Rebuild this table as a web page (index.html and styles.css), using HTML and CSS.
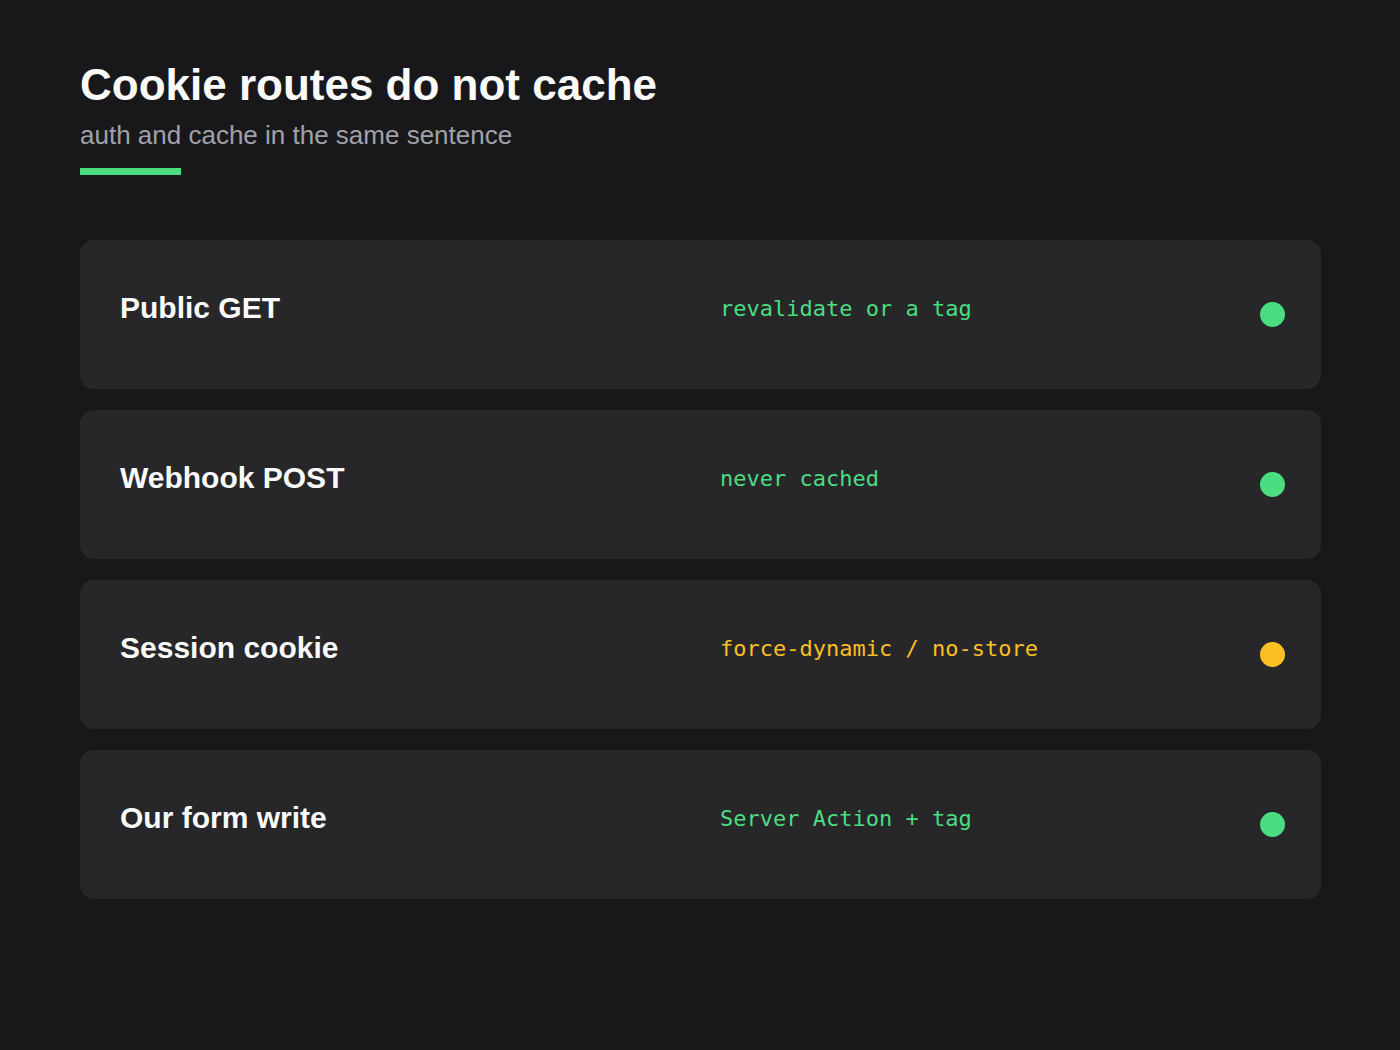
FILE: index.html
```html
<!DOCTYPE html>
<html lang="en">

<head>
  <meta charset="UTF-8" />
  <meta name="viewport" content="width=device-width, initial-scale=1.0" />
  <title>Cookie routes do not cache</title>
  <link rel="stylesheet" href="styles.css">
</head>

<body>
  <div class="page">
    <div class="header">
      <h1>Cookie routes do not cache</h1>
      <div class="subtitle">auth and cache in the same sentence</div>
      <div class="accent-bar"></div>
    </div>

    <div class="route-list">
      <div class="route-card">
        <div class="route-info">
          <div class="route-name">Public GET</div>
          <div class="route-rule ok">revalidate or a tag</div>
        </div>
        <span class="status-dot ok"></span>
      </div>

      <div class="route-card">
        <div class="route-info">
          <div class="route-name">Webhook POST</div>
          <div class="route-rule ok">never cached</div>
        </div>
        <span class="status-dot ok"></span>
      </div>

      <div class="route-card">
        <div class="route-info">
          <div class="route-name">Session cookie</div>
          <div class="route-rule warn">force-dynamic / no-store</div>
        </div>
        <span class="status-dot warn"></span>
      </div>

      <div class="route-card">
        <div class="route-info">
          <div class="route-name">Our form write</div>
          <div class="route-rule ok">Server Action + tag</div>
        </div>
        <span class="status-dot ok"></span>
      </div>
    </div>
  </div>
</body>

</html>
```

FILE: styles.css
```css
/* Base */
* {
  box-sizing: border-box;
  margin: 0;
  padding: 0;
}

body {
  font-family: 'Liberation Sans', Arial, sans-serif;
  background-color: #18181b;
  color: #fafafa;
  width: 1400px;
  height: 1050px;
}

.page {
  padding: 60px 79px 60px 80px;
}

/* Header */
h1 {
  font-size: 44px;
  font-weight: 700;
  color: #fafafa;
}

.subtitle {
  font-size: 26px;
  color: #a1a1aa;
  margin-top: 10px;
}

.accent-bar {
  width: 101px;
  height: 7px;
  background-color: #4ade80;
  margin-top: 17px;
}

/* Route cards */
.route-list {
  display: flex;
  flex-direction: column;
  gap: 21px;
  margin-top: 65px;
}

.route-card {
  display: flex;
  align-items: center;
  height: 149px;
  padding: 0 36px 0 40px;
  background-color: #27272a;
  border-radius: 14px;
}

.route-info {
  flex: 1;
  display: flex;
  align-items: center;
  padding-bottom: 13px;
}

.route-name {
  width: 600px;
  font-size: 30px;
  font-weight: 700;
  color: #fafafa;
}

.route-rule {
  font-family: 'DejaVu Sans Mono', monospace;
  font-size: 22px;
}

.route-rule.ok {
  color: #4ade80;
}

.route-rule.warn {
  color: #fbbf24;
}

.status-dot {
  width: 25px;
  height: 25px;
  border-radius: 50%;
}

.status-dot.ok {
  background-color: #4ade80;
}

.status-dot.warn {
  background-color: #fbbf24;
}
```
